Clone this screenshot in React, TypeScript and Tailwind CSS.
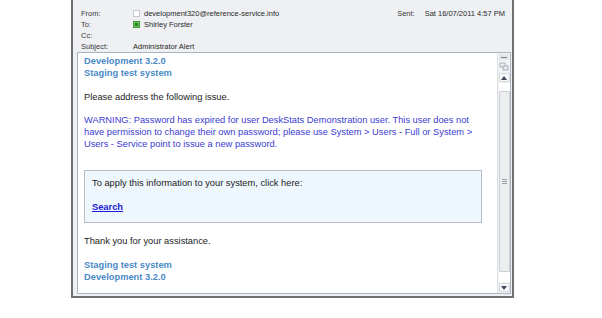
import { FC } from 'react';

const HeaderRow: FC<{ label: string; children?: React.ReactNode }> = ({ label, children }) => (
  <div className="flex h-[11px] items-center">
    <span className="w-[52px] text-[#3a3a3a]">{label}</span>
    <span className="flex items-center gap-[3px] text-[#2a2a2a]">{children}</span>
  </div>
);

const Scrollbar: FC = () => (
  <div className="flex w-[13px] flex-col border-l border-[#dcdfe3] bg-[#f2f3f5]">
    <div className="mx-auto mt-[1px] flex h-[6px] w-[10px] items-center justify-center rounded-[1px] bg-[#e4e6e9]">
      <div className="h-[1px] w-[6px] bg-[#7a7a7a]" />
    </div>
    <div className="mx-auto mt-[2px] flex h-[9px] w-[10px] items-center justify-center">
      <svg width="10" height="9" viewBox="0 0 10 9">
        <rect x="1" y="1" width="5" height="4" fill="none" stroke="#9aa0a8" strokeWidth="0.8" />
        <rect x="4" y="4" width="5" height="4" fill="#e8eaee" stroke="#9aa0a8" strokeWidth="0.8" />
      </svg>
    </div>
    <div className="mx-auto mt-[2px] flex h-[9px] w-[11px] items-center justify-center rounded-[1px] border border-[#d6d9de] bg-[#f7f8f9]">
      <svg width="6" height="4" viewBox="0 0 6 4">
        <path d="M0 4 L3 0 L6 4 Z" fill="#3d4a5c" />
      </svg>
    </div>
    <div className="mx-auto mt-[1px] h-[8px] w-[11px] bg-white" />
    <div className="mx-auto flex h-[181px] w-[11px] items-center justify-center rounded-[1px] border border-[#cdd1d6] bg-[#eceef0]">
      <div className="flex flex-col gap-[1px]">
        <div className="h-[1px] w-[5px] bg-[#9ca2aa]" />
        <div className="h-[1px] w-[5px] bg-[#9ca2aa]" />
        <div className="h-[1px] w-[5px] bg-[#9ca2aa]" />
      </div>
    </div>
    <div className="mx-auto h-[10px] w-[11px] bg-white" />
    <div className="mx-auto mt-[1px] flex h-[9px] w-[11px] items-center justify-center rounded-[1px] border border-[#d6d9de] bg-[#f7f8f9]">
      <svg width="6" height="4" viewBox="0 0 6 4">
        <path d="M0 0 L6 0 L3 4 Z" fill="#3d4a5c" />
      </svg>
    </div>
  </div>
);

export default function App() {
  return (
    <div className="h-[318px] w-[602px] bg-white font-['Liberation_Sans',Arial,sans-serif]">
      <div className="ml-[71px] flex h-[298px] w-[443px] flex-col border-x-2 border-b-2 border-[#707070] bg-[#eef0f3]">
        <div className="flex h-[52px] items-start justify-between pl-[8px] pr-[7px] pt-[8px] text-[7.5px] leading-[11px]">
          <div className="flex flex-col">
            <HeaderRow label="From:">
              <span className="h-[7px] w-[7px] border border-[#c4c7cc] bg-white" />
              <span className="ml-[1px]">development320@reference-service.info</span>
            </HeaderRow>
            <HeaderRow label="To:">
              <span className="flex h-[7px] w-[7px] items-center justify-center border border-[#3f9b2f] bg-[#6cc456]">
                <span className="h-[3px] w-[3px] bg-[#2e7d20]" />
              </span>
              <span className="ml-[1px]">Shirley Forster</span>
            </HeaderRow>
            <HeaderRow label="Cc:" />
            <HeaderRow label="Subject:">
              <span>Administrator Alert</span>
            </HeaderRow>
          </div>
          <div className="flex h-[11px] items-center gap-[10px] text-[#3a3a3a]">
            <span>Sent:</span>
            <span className="text-[#2a2a2a]">Sat 16/07/2011 4:57 PM</span>
          </div>
        </div>
        <div className="mb-[2px] ml-[4px] mr-[1px] flex flex-1 border border-[#aab4bf] bg-white">
          <div className="flex-1 pl-[6px] pr-[15px] pt-[2px] text-[9.3px] leading-[12px] text-[#222]">
            <div className="font-bold text-[#4a8ac8]">
              <div>Development 3.2.0</div>
              <div>Staging test system</div>
            </div>
            <p className="mt-[12px]">Please address the following issue.</p>
            <p className="mt-[11px] text-[#3b3bd0]">
              WARNING: Password has expired for user DeskStats Demonstration user. This user does not have
              permission to change their own password; please use System &gt; Users - Full or System &gt;
              Users - Service point to issue a new password.
            </p>
            <div className="mt-[20px] h-[53px] border border-[#b5bcc6] bg-[#eef6fe] px-[7px] pt-[6px]">
              <div>To apply this information to your system, click here:</div>
              <a href="#" className="mt-[12px] block font-bold text-[#1a1ad6] underline">
                Search
              </a>
            </div>
            <p className="mt-[12px]">Thank you for your assistance.</p>
            <div className="mt-[12px] font-bold text-[#4a8ac8]">
              <div>Staging test system</div>
              <div>Development 3.2.0</div>
            </div>
          </div>
          <Scrollbar />
        </div>
      </div>
    </div>
  );
}
